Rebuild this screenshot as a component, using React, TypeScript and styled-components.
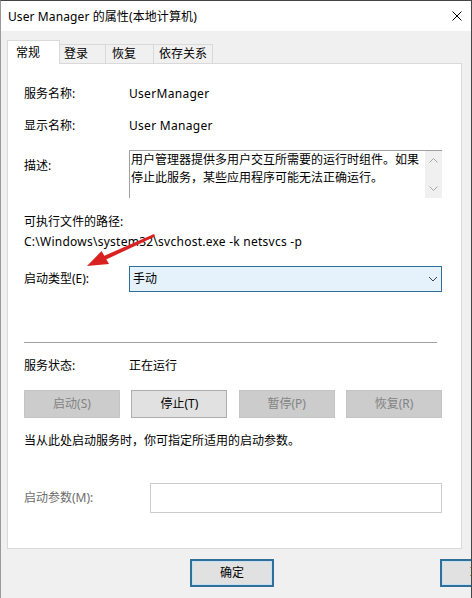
import React from "react";
import styled, { createGlobalStyle } from "styled-components";

const Global = createGlobalStyle`
  html, body { margin: 0; padding: 0; background: #f0f0f0; }
  body {
    font-family: "Noto Sans", "Noto Sans CJK SC", sans-serif;
    font-size: 12px;
    color: #000;
  }
  * { box-sizing: border-box; }
`;

const FONT = `"Noto Sans", "Noto Sans CJK SC", sans-serif`;

const Window = styled.div`
  position: relative;
  width: 472px;
  height: 598px;
  overflow: hidden;
  background: #f0f0f0;
  border-top: 1px solid #454545;
  border-right: 1px solid #454545;
  border-left: 1px solid #9a9a9a;
  display: flex;
  flex-direction: column;
`;

const TitleBar = styled.div`
  height: 30px;
  flex-shrink: 0;
  background: #fff;
  display: flex;
  align-items: center;
  padding: 2px 9px 0 7px;
`;

const TitleText = styled.span`
  font-size: 12px;
  line-height: 16px;
  letter-spacing: 0.1px;
  flex: 1;
`;

const CloseIcon = styled.svg`
  width: 10px;
  height: 10px;
  margin-top: -3px;
`;

const Body = styled.div`
  flex: 1;
  display: flex;
  flex-direction: column;
  padding: 0 9px 0 6px;
`;

const TabStrip = styled.div`
  height: 32px;
  flex-shrink: 0;
  display: flex;
  align-items: flex-end;
  position: relative;
  z-index: 1;
`;

const Tab = styled.div<{ $active?: boolean; $w: number; $pl: number }>`
  width: ${(p) => p.$w}px;
  padding-left: ${(p) => p.$pl}px;
  height: ${(p) => (p.$active ? 24 : 19)}px;
  margin-bottom: ${(p) => (p.$active ? -1 : 0)}px;
  background: ${(p) => (p.$active ? "#fff" : "#f0f0f0")};
  border-top: 1px solid #d9d9d9;
  border-right: 1px solid #d9d9d9;
  border-left: ${(p) => (p.$active ? "1px solid #d9d9d9" : "none")};
  display: flex;
  align-items: center;
  line-height: 16px;
  flex-shrink: 0;
`;

const Panel = styled.div`
  height: 486px;
  flex-shrink: 0;
  background: #fff;
  border: 1px solid #d9d9d9;
  padding: 22px 19px 0 16px;
  display: flex;
  flex-direction: column;
`;

const Row = styled.div<{ $mt: number; $top?: boolean }>`
  display: flex;
  align-items: ${(p) => (p.$top ? "flex-start" : "center")};
  margin-top: ${(p) => p.$mt}px;
  line-height: 16px;
  white-space: nowrap;
`;

const Label = styled.div<{ $w?: number; $muted?: boolean; $mt?: number }>`
  width: ${(p) => p.$w ?? 105}px;
  flex-shrink: 0;
  color: ${(p) => (p.$muted ? "#6d6d6d" : "#000")};
  margin-top: ${(p) => p.$mt ?? 0}px;
`;

const Value = styled.div<{ $ls?: number }>`
  flex: 1;
  letter-spacing: ${(p) => p.$ls ?? 0}px;
`;

const Line = styled.div<{ $mt: number; $ls?: number }>`
  margin-top: ${(p) => p.$mt}px;
  line-height: 16px;
  white-space: nowrap;
  letter-spacing: ${(p) => p.$ls ?? 0}px;
`;

const DescBox = styled.div`
  flex: 1;
  height: 48px;
  display: flex;
  border-top: 1px solid #a0a0a0;
  border-left: 1px solid #a0a0a0;
`;

const DescText = styled.div`
  flex: 1;
  padding-left: 1px;
  line-height: 18px;
  white-space: nowrap;
  overflow: hidden;
`;

const ScrollBar = styled.div`
  width: 17px;
  flex-shrink: 0;
  background: #f0f0f0;
  display: flex;
  flex-direction: column;
  justify-content: space-between;
  padding: 1px 0;
`;

const ScrollArrow = styled.svg`
  width: 17px;
  height: 17px;
  display: block;
`;

const Combo = styled.div`
  flex: 1;
  height: 26px;
  border: 1px solid #2f6f9a;
  background: #e5f1fb;
  display: flex;
  align-items: center;
  justify-content: space-between;
  padding: 0 3px 0 3px;
`;

const ComboArrow = styled.svg`
  width: 10px;
  height: 10px;
  display: block;
`;

const Separator = styled.div`
  margin-top: 50px;
  height: 1px;
  width: 413px;
  background: #a0a0a0;
`;

const ButtonRow = styled.div`
  margin-top: 16px;
  display: flex;
  justify-content: space-between;
`;

const Btn = styled.button<{ $off?: boolean }>`
  width: 96px;
  height: 28px;
  padding: 0;
  font-family: ${FONT};
  font-size: 12px;
  line-height: 16px;
  background: ${(p) => (p.$off ? "#cccccc" : "#e1e1e1")};
  border: 1px solid ${(p) => (p.$off ? "#c4c4c4" : "#adadad")};
  color: ${(p) => (p.$off ? "#838383" : "#000")};
`;

const ParamInput = styled.div`
  flex: 1;
  height: 30px;
  border: 1px solid #cccccc;
  background: #fff;
`;

const Footer = styled.div`
  padding-top: 10px;
  display: flex;
`;

const DialogBtn = styled.button<{ $ml: number }>`
  flex-shrink: 0;
  width: 84px;
  height: 28px;
  margin-left: ${(p) => p.$ml}px;
  padding: 0;
  font-family: ${FONT};
  font-size: 12px;
  line-height: 16px;
  color: #000;
  background: #e1e1e1;
  border: 2px solid #2f6f9a;
  box-shadow: inset 0 0 0 1px #c4e0f4;
`;

const ArrowOverlay = styled.svg`
  position: absolute;
  left: -1px;
  top: -1px;
  width: 472px;
  height: 598px;
  pointer-events: none;
`;

const Chevron = ({ up }: { up?: boolean }) => (
  <ScrollArrow viewBox="0 0 17 17">
    <polyline
      points={up ? "4.5,10.5 8.5,6.5 12.5,10.5" : "4.5,6.5 8.5,10.5 12.5,6.5"}
      fill="none"
      stroke="#a6a6a6"
      strokeWidth="1"
    />
  </ScrollArrow>
);

export default function App() {
  return (
    <>
      <Global />
      <Window>
        <TitleBar>
          <TitleText>User Manager 的属性(本地计算机)</TitleText>
          <CloseIcon viewBox="0 0 10 10">
            <path d="M0.5 0.5 L9.5 9.5 M9.5 0.5 L0.5 9.5" stroke="#000" strokeWidth="1" />
          </CloseIcon>
        </TitleBar>
        <Body>
          <TabStrip>
            <Tab $active $w={53} $pl={8}>常规</Tab>
            <Tab $w={46} $pl={4}>登录</Tab>
            <Tab $w={48} $pl={6}>恢复</Tab>
            <Tab $w={59} $pl={5}>依存关系</Tab>
          </TabStrip>
          <Panel>
            <Row $mt={0}>
              <Label>服务名称:</Label>
              <Value $ls={0.3}>UserManager</Value>
            </Row>
            <Row $mt={16}>
              <Label>显示名称:</Label>
              <Value $ls={0.3}>User Manager</Value>
            </Row>
            <Row $mt={16} $top>
              <Label $mt={8}>描述:</Label>
              <DescBox>
                <DescText>
                  用户管理器提供多用户交互所需要的运行时组件。如果
                  <br />
                  停止此服务，某些应用程序可能无法正确运行。
                </DescText>
                <ScrollBar>
                  <Chevron up />
                  <Chevron />
                </ScrollBar>
              </DescBox>
            </Row>
            <Line $mt={16}>可执行文件的路径:</Line>
            <Line $mt={4} $ls={0.25}>C:\Windows\system32\svchost.exe -k netsvcs -p</Line>
            <Row $mt={16}>
              <Label>启动类型(E):</Label>
              <Combo>
                <span>手动</span>
                <ComboArrow viewBox="0 0 10 10">
                  <polyline points="1,3 5,7 9,3" fill="none" stroke="#404040" strokeWidth="1" />
                </ComboArrow>
              </Combo>
            </Row>
            <Separator />
            <Row $mt={15}>
              <Label>服务状态:</Label>
              <Value>正在运行</Value>
            </Row>
            <ButtonRow>
              <Btn $off>启动(S)</Btn>
              <Btn>停止(T)</Btn>
              <Btn $off>暂停(P)</Btn>
              <Btn $off>恢复(R)</Btn>
            </ButtonRow>
            <Line $mt={15}>当从此处启动服务时，你可指定所适用的启动参数。</Line>
            <Row $mt={34}>
              <Label $w={126} $muted>启动参数(M):</Label>
              <ParamInput />
            </Row>
          </Panel>
          <Footer>
            <DialogBtn $ml={183}>确定</DialogBtn>
            <DialogBtn $ml={166}>取消</DialogBtn>
          </Footer>
        </Body>
        <ArrowOverlay viewBox="0 0 472 598">
          <polygon points="154,234 155.2,236.6 105,260 103.4,256.2" fill="#d92121" />
          <polygon points="87,266 101.6,251 109,264" fill="#d92121" />
        </ArrowOverlay>
      </Window>
    </>
  );
}
